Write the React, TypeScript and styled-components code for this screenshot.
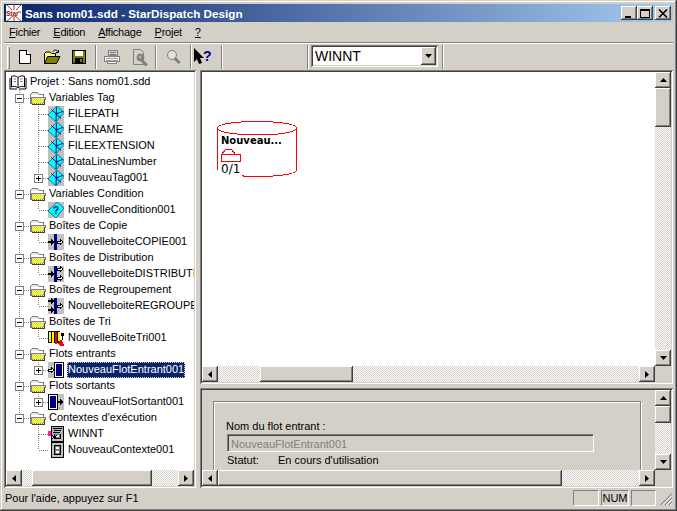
import styled, { createGlobalStyle } from 'styled-components';

const GlobalStyle = createGlobalStyle`
  html, body { margin: 0; padding: 0; background: #d4d0c8; }
  * { box-sizing: border-box; }
`;

const FACE = '#d4d0c8';
const DITHER = `repeating-conic-gradient(#fff 0 25%, ${FACE} 0 50%) 0 0 / 2px 2px`;
const RAISED = 'inset -1px -1px 0 #404040, inset 1px 1px 0 #fff, inset -2px -2px 0 #808080';
const SUNKEN = 'inset 1px 1px 0 #808080, inset -1px -1px 0 #fff, inset 2px 2px 0 #404040, inset -2px -2px 0 #d4d0c8';

type IconKind = 'tag' | 'cond' | 'copy' | 'dist' | 'group' | 'sort' | 'in' | 'out' | 'ctxOn' | 'ctx';

type TreeRow = {
  level: 0 | 1 | 2;
  label: string;
  icon?: IconKind;
  plus?: boolean;
  last?: boolean;
  lastGroup?: boolean;
  selected?: boolean;
};

const rows: TreeRow[] = [
  { level: 0, label: 'Projet : Sans nom01.sdd' },
  { level: 1, label: 'Variables Tag' },
  { level: 2, label: 'FILEPATH', icon: 'tag' },
  { level: 2, label: 'FILENAME', icon: 'tag' },
  { level: 2, label: 'FILEEXTENSION', icon: 'tag' },
  { level: 2, label: 'DataLinesNumber', icon: 'tag' },
  { level: 2, label: 'NouveauTag001', icon: 'tag', plus: true, last: true },
  { level: 1, label: 'Variables Condition' },
  { level: 2, label: 'NouvelleCondition001', icon: 'cond', last: true },
  { level: 1, label: 'Boîtes de Copie' },
  { level: 2, label: 'NouvelleboiteCOPIE001', icon: 'copy', last: true },
  { level: 1, label: 'Boîtes de Distribution' },
  { level: 2, label: 'NouvelleboiteDISTRIBUTION001', icon: 'dist', last: true },
  { level: 1, label: 'Boîtes de Regroupement' },
  { level: 2, label: 'NouvelleboiteREGROUPEMENT001', icon: 'group', last: true },
  { level: 1, label: 'Boîtes de Tri' },
  { level: 2, label: 'NouvelleBoiteTri001', icon: 'sort', last: true },
  { level: 1, label: 'Flots entrants' },
  { level: 2, label: 'NouveauFlotEntrant001', icon: 'in', plus: true, last: true, selected: true },
  { level: 1, label: 'Flots sortants' },
  { level: 2, label: 'NouveauFlotSortant001', icon: 'out', plus: true, last: true },
  { level: 1, label: "Contextes d'exécution", last: true },
  { level: 2, label: 'WINNT', icon: 'ctxOn', lastGroup: true },
  { level: 2, label: 'NouveauContexte001', icon: 'ctx', last: true, lastGroup: true },
];

// checker of yellow pixels on the folder front
const folderDots: [number, number][] = [];
for (let y = 7; y < 13; y++) {
  for (let x = 3; x < 15; x++) {
    if ((x + y) % 2 === 0) folderDots.push([x, y]);
  }
}

const Logo = () => (
  <svg width="16" height="16" viewBox="0 0 16 16">
    <rect width="16" height="16" fill="#fff" />
    <g stroke="#b03020" strokeWidth="1">
      <line x1="8" y1="7" x2="1" y2="0" />
      <line x1="8" y1="7" x2="8" y2="0" />
      <line x1="8" y1="7" x2="15" y2="0" />
      <line x1="8" y1="7" x2="15" y2="7" />
      <line x1="8" y1="10" x2="15" y2="16" />
      <line x1="8" y1="10" x2="8" y2="16" />
      <line x1="8" y1="10" x2="1" y2="16" />
    </g>
    <rect x="0" y="5" width="12" height="6" fill="#fff" />
    <text x="0" y="10.5" fontSize="6.5" fontWeight="700" fill="#a01010" fontFamily="Liberation Sans, sans-serif">Star</text>
  </svg>
);

const FolderOpen = () => (
  <svg width="18" height="15" viewBox="0 0 18 15" shapeRendering="crispEdges">
    <polygon points="1.5,12.5 1.5,3.5 3.5,1.5 8.5,1.5 10.5,3.5 14.5,3.5 14.5,12.5" fill="#ece8e0" stroke="#808080" />
    <rect x="2" y="4" width="12" height="2" fill="#fff" />
    <polygon points="2.5,12.5 2.5,6.5 16.5,6.5 16.5,7.5 14.5,12.5" fill="#d8d4b0" stroke="#808080" />
    {folderDots.map(([x, y]) => (
      <rect key={`${x}-${y}`} x={x} y={y} width="1" height="1" fill="#ffff00" />
    ))}
    <rect x="3" y="13" width="13" height="1" fill="#404040" />
    <rect x="15" y="8" width="1" height="5" fill="#404040" />
  </svg>
);

const Book = () => (
  <svg width="18" height="16" viewBox="0 0 18 16" fill="none" stroke="#000">
    <path d="M9 3.5 C7 1.5 4 1.5 2.5 2.5 V13 C4 12 7 12 9 14 C11 12 14 12 15.5 13 V2.5 C14 1.5 11 1.5 9 3.5 Z" fill="#fff" />
    <path d="M9 3.5 V14 M1 4 V15 H8 M17 4 V15 H10" />
    <path d="M4.5 5 H7 M4.5 7.5 H7 M11 5 H13.5 M11 7.5 H13.5" stroke="#808080" />
  </svg>
);

const NodeIcon = ({ kind }: { kind: IconKind }) => {
  if (kind === 'tag' || kind === 'cond') {
    return (
      <svg width="16" height="16" viewBox="0 0 16 16">
        <rect width="16" height="16" fill="#c0c0c0" />
        <polygon points="9,0 16,6 8,16 0,9" fill="#00ffff" stroke="#006080" strokeWidth="0.8" />
        {kind === 'tag' ? (
          <path d="M3.5 3.5 L13 12.5 M8.5 1.5 L8 15 M8 8 L14.5 5.5" stroke="#000080" strokeWidth="1" fill="none" />
        ) : (
          <text x="5" y="12" fontSize="10" fontWeight="700" fill="#000080" fontFamily="Liberation Sans, sans-serif">?</text>
        )}
      </svg>
    );
  }
  if (kind === 'copy' || kind === 'dist' || kind === 'group') {
    return (
      <svg width="16" height="16" viewBox="0 0 16 16" shapeRendering="crispEdges">
        <rect width="16" height="16" fill="#c0c0c0" />
        <rect x="6" y="0" width="3" height="16" fill="#000080" />
        {kind !== 'group' && <polygon points="0,7 3,7 3,5 6,8 3,11 3,9 0,9" fill="#000" />}
        {kind !== 'dist' && <polygon points="9,7 12,7 12,5 15,8 12,11 12,9 9,9" fill="#fff" stroke="#000" />}
        {kind === 'dist' && <polygon points="9,2 12,2 12,0 15,3 12,6 12,4 9,4" fill="#fff" stroke="#000" />}
        {kind === 'dist' && <polygon points="9,11 12,11 12,9 15,12 12,15 12,13 9,13" fill="#fff" stroke="#000" />}
        {kind === 'group' && <polygon points="0,2 3,2 3,0 6,3 3,6 3,4 0,4" fill="#000" />}
        {kind === 'group' && <polygon points="0,11 3,11 3,9 6,12 3,15 3,13 0,13" fill="#000" />}
      </svg>
    );
  }
  if (kind === 'sort') {
    return (
      <svg width="16" height="16" viewBox="0 0 16 16" shapeRendering="crispEdges">
        <rect x="0" y="1" width="12" height="12" fill="#000" />
        <rect x="1" y="2" width="2" height="10" fill="#ffff00" />
        <rect x="4" y="2" width="2" height="11" fill="#ffff00" />
        <rect x="7" y="2" width="2" height="12" fill="#ff0000" />
        <rect x="10" y="2" width="2" height="9" fill="#ffff00" />
        <rect x="13" y="3" width="3" height="3" fill="#000" />
        <rect x="14" y="6" width="1" height="4" fill="#000" />
        <polygon points="10,14 13,9 16,15 16,16 12,16" fill="#ff0000" />
      </svg>
    );
  }
  if (kind === 'in' || kind === 'out') {
    return (
      <svg width="16" height="16" viewBox="0 0 16 16" shapeRendering="crispEdges">
        <rect width="16" height="16" fill="#c0c0c0" />
        {kind === 'in' ? (
          <>
            <polygon points="0,7 3,7 3,5 6,8 3,11 3,9 0,9" fill="#fff" stroke="#000" />
            <rect x="6.5" y="0.5" width="9" height="15" fill="#fff" stroke="#000" />
            <rect x="8" y="2" width="6" height="12" fill="#000080" />
          </>
        ) : (
          <>
            <rect x="0.5" y="0.5" width="9" height="15" fill="#fff" stroke="#000" />
            <rect x="2" y="2" width="6" height="12" fill="#000080" />
            <polygon points="10,7 12,7 12,5 15,8 12,11 12,9 10,9" fill="#000" />
          </>
        )}
      </svg>
    );
  }
  return (
    <svg width="16" height="16" viewBox="0 0 16 16" shapeRendering="crispEdges">
      <rect x="3.5" y="0.5" width="12" height="15" fill="#c0c0c0" stroke="#000" />
      <rect x="6.5" y="3.5" width="6" height="9" fill="#808080" stroke="#000" />
      <rect x="8" y="5" width="3" height="2" fill="#fff" />
      <rect x="8" y="9" width="3" height="2" fill="#fff" />
      {kind === 'ctxOn' && (
        <>
          <rect x="4" y="1" width="11" height="7" fill="#b0b0b0" />
          <path d="M5 2 H14 M6 4 H13 M5 6 H12 M4 9 L9 13 M9 9 L4 13" stroke="#000" fill="none" />
          <rect x="0" y="5" width="3" height="5" fill="#ff20a0" />
        </>
      )}
    </svg>
  );
};

const ToolIcon = ({ kind }: { kind: 'new' | 'open' | 'save' | 'print' | 'preview' | 'find' | 'help' }) => {
  switch (kind) {
    case 'new':
      return (
        <svg width="16" height="16" viewBox="0 0 16 16" shapeRendering="crispEdges">
          <path d="M2.5 1.5 H9.5 L13.5 5.5 V14.5 H2.5 Z" fill="#fff" stroke="#000" />
          <path d="M9.5 1.5 V5.5 H13.5" fill="#fff" stroke="#000" />
        </svg>
      );
    case 'open':
      return (
        <svg width="18" height="16" viewBox="0 0 18 16">
          <path d="M1.5 14.5 V4.5 L3 3 H7 L8.5 4.5 H12.5 V7" fill="#ffff80" stroke="#000" />
          <polygon points="1.5,14.5 4.5,7.5 17,7.5 13.5,14.5" fill="#808000" stroke="#000" />
          <path d="M10 2.5 C11 0.5 14 0.5 15 3 M15.5 1 V3.5 H13" fill="none" stroke="#000" />
        </svg>
      );
    case 'save':
      return (
        <svg width="16" height="16" viewBox="0 0 16 16" shapeRendering="crispEdges">
          <rect x="1.5" y="1.5" width="13" height="13" fill="#808000" stroke="#000" />
          <rect x="4" y="2" width="8" height="5" fill="#fff" />
          <rect x="4" y="9" width="8" height="5" fill="#000" />
          <rect x="9" y="10" width="2" height="3" fill="#808000" />
        </svg>
      );
    case 'print':
      return (
        <svg width="18" height="16" viewBox="0 0 18 16" shapeRendering="crispEdges">
          <path d="M5.5 1.5 H14.5 V6.5 H5.5 Z" fill="#d4d0c8" stroke="#808080" />
          <path d="M7 3.5 H13 M7 5 H13" stroke="#808080" />
          <path d="M1.5 7.5 H16.5 V12.5 H1.5 Z" fill="#fff" stroke="#808080" />
          <path d="M3 9.5 H15 M3 11 H15" stroke="#a0a0a0" />
          <path d="M4.5 12.5 H13.5 V14.5 H4.5 Z" fill="#fff" stroke="#808080" />
        </svg>
      );
    case 'preview':
      return (
        <svg width="18" height="18" viewBox="0 0 18 18">
          <path d="M1.5 1.5 H8.5 L11.5 4.5 V16.5 H1.5 Z" fill="#d4d0c8" stroke="#808080" />
          <circle cx="8.5" cy="9.5" r="3.5" fill="#808080" stroke="#808080" />
          <rect x="10" y="12" width="7" height="3" transform="rotate(45 11 13)" fill="#808080" />
          <circle cx="8" cy="9" r="1.5" fill="#b0b0b0" />
        </svg>
      );
    case 'find':
      return (
        <svg width="18" height="16" viewBox="0 0 18 16">
          <circle cx="7" cy="6" r="4.5" fill="#e4e0d8" stroke="#808080" />
          <rect x="10" y="8.5" width="7" height="3" transform="rotate(45 11 9)" fill="#808080" />
        </svg>
      );
    default:
      return (
        <svg width="19" height="18" viewBox="0 0 19 18">
          <polygon points="1,0 1,14 4,11 6,16 9,15 7,10 11,10" fill="#000" />
          <text x="10" y="13" fontSize="14" fontWeight="700" fill="#000080" fontFamily="Liberation Sans, sans-serif">?</text>
        </svg>
      );
  }
};

const ScrollArrow = ({ dir }: { dir: 'up' | 'down' | 'left' | 'right' }) => {
  const points = {
    up: '0,4 7,4 3.5,0',
    down: '0,0 7,0 3.5,4',
    left: '4,0 4,7 0,3.5',
    right: '0,0 0,7 4,3.5',
  }[dir];
  const horizontal = dir === 'left' || dir === 'right';
  return (
    <svg width={horizontal ? 4 : 7} height={horizontal ? 7 : 4} viewBox={horizontal ? '0 0 4 7' : '0 0 7 4'}>
      <polygon points={points} fill="#000" />
    </svg>
  );
};

const HScroll = ({ offset, size }: { offset: number; size: number }) => (
  <HBar>
    <ScrollBtn><ScrollArrow dir="left" /></ScrollBtn>
    <Trough>
      <HThumb $offset={offset} $size={size} />
    </Trough>
    <ScrollBtn><ScrollArrow dir="right" /></ScrollBtn>
  </HBar>
);

const VScroll = ({ offset, size }: { offset: number; size: number }) => (
  <VBar>
    <ScrollBtn><ScrollArrow dir="up" /></ScrollBtn>
    <VTrough>
      <VThumb $offset={offset} $size={size} />
    </VTrough>
    <ScrollBtn><ScrollArrow dir="down" /></ScrollBtn>
  </VBar>
);

const ExpanderBox = ({ open }: { open?: boolean }) => (
  <Expander>
    <svg width="7" height="7" viewBox="0 0 7 7" shapeRendering="crispEdges">
      <rect x="1" y="3" width="5" height="1" fill="#000" />
      {!open && <rect x="3" y="1" width="1" height="5" fill="#000" />}
    </svg>
  </Expander>
);

const Row = ({ row }: { row: TreeRow }) => (
  <RowLine $level={row.level}>
    {row.level === 1 && (
      <Guide $line={row.last ? 'half' : 'full'} $stem>
        <ExpanderBox open />
      </Guide>
    )}
    {row.level === 2 && (
      <>
        <Guide $line={row.lastGroup ? 'none' : 'full'} />
        <Guide $line={row.last ? 'half' : 'full'} $stem>
          {row.plus && <ExpanderBox />}
        </Guide>
      </>
    )}
    {row.level === 0 && <Book />}
    {row.level === 1 && <FolderSlot><FolderOpen /></FolderSlot>}
    {row.icon && <NodeIcon kind={row.icon} />}
    <Label $selected={row.selected} $level={row.level}>{row.label}</Label>
  </RowLine>
);

export default function App() {
  return (
    <>
      <GlobalStyle />
      <Window>
        <TitleBar>
          <Logo />
          <TitleText>Sans nom01.sdd - StarDispatch Design</TitleText>
          <CaptionButtons>
            <CaptionBtn>
              <svg width="10" height="9" viewBox="0 0 10 9"><rect x="1" y="7" width="6" height="2" fill="#000" /></svg>
            </CaptionBtn>
            <CaptionBtn>
              <svg width="10" height="9" viewBox="0 0 10 9" shapeRendering="crispEdges"><rect x="0.5" y="0.5" width="9" height="8" fill="none" stroke="#000" /><rect x="0" y="0" width="10" height="2" fill="#000" /></svg>
            </CaptionBtn>
            <CloseBtn>
              <svg width="10" height="9" viewBox="0 0 10 9"><path d="M1 0.5 L9 8.5 M9 0.5 L1 8.5" stroke="#000" strokeWidth="1.6" /></svg>
            </CloseBtn>
          </CaptionButtons>
        </TitleBar>

        <MenuBar>
          <MenuItem><u>F</u>ichier</MenuItem>
          <MenuItem><u>E</u>dition</MenuItem>
          <MenuItem><u>A</u>ffichage</MenuItem>
          <MenuItem><u>P</u>rojet</MenuItem>
          <MenuItem><u>?</u></MenuItem>
        </MenuBar>
        <Rule />

        <ToolBar>
          <Grip />
          <ToolSlot $w={27}><ToolIcon kind="new" /></ToolSlot>
          <ToolSlot $w={27}><ToolIcon kind="open" /></ToolSlot>
          <ToolSlot $w={27}><ToolIcon kind="save" /></ToolSlot>
          <Spacer $w={3} />
          <ToolSep />
          <ToolSlot $w={29}><ToolIcon kind="print" /></ToolSlot>
          <ToolSlot $w={29}><ToolIcon kind="preview" /></ToolSlot>
          <ToolSep />
          <ToolSlot $w={33}><ToolIcon kind="find" /></ToolSlot>
          <ToolSep />
          <ToolSlot $w={21}><ToolIcon kind="help" /></ToolSlot>
          <Spacer $w={8} />
          <ToolSep />
          <Spacer $w={84} />
          <ToolSep />
          <Combo>
            <ComboText>WINNT</ComboText>
            <ComboBtn><ScrollArrow dir="down" /></ComboBtn>
          </Combo>
          <ToolSep />
        </ToolBar>

        <Body>
          <TreePanel>
            <TreeView>
              {rows.map((row) => <Row key={row.label} row={row} />)}
            </TreeView>
            <HScroll offset={10} size={120} />
          </TreePanel>

          <RightColumn>
            <UpperPane>
              <PaneGrid>
                <Canvas>
                  <DiagramNode>
                    <NodeOutline width="81" height="57" viewBox="0 0 81 57" shapeRendering="crispEdges">
                      <path d="M0.5 7 C0.5 3 18 0.5 40 0.5 C62 0.5 79.5 3 79.5 7 C79.5 11 62 14 40 14 C18 14 0.5 11 0.5 7 V49 M79.5 7 V49 C79.5 53 62 55.5 40 55.5 C32 55.5 27 55.5 23 54.5" fill="none" stroke="#f00" />
                    </NodeOutline>
                    <NodeTitle>Nouveau...</NodeTitle>
                    <NodeFolder width="21" height="13" viewBox="0 0 21 13" shapeRendering="crispEdges">
                      <path d="M0.5 5.5 L4.5 0.5 H10.5 L14.5 5.5 H19.5 V12.5 H0.5 Z M0.5 5.5 H14.5" fill="none" stroke="#f00" />
                    </NodeFolder>
                    <NodeCount>0/1</NodeCount>
                  </DiagramNode>
                </Canvas>
                <VScroll offset={0} size={39} />
                <HScroll offset={42} size={93} />
                <Corner />
              </PaneGrid>
            </UpperPane>

            <LowerPane>
              <PaneGrid>
                <FormArea>
                  <GroupBox>
                    <FieldLabel>Nom du flot entrant :</FieldLabel>
                    <DisabledInput>NouveauFlotEntrant001</DisabledInput>
                    <StatusLine>
                      <StatusKey>Statut:</StatusKey>
                      <span>En cours d'utilisation</span>
                    </StatusLine>
                  </GroupBox>
                </FormArea>
                <VScroll offset={0} size={17} />
                <HScroll offset={0} size={344} />
                <Corner />
              </PaneGrid>
            </LowerPane>
          </RightColumn>
        </Body>

        <StatusBar>
          <StatusText>Pour l'aide, appuyez sur F1</StatusText>
          <Indicator $w={26} />
          <Indicator $w={28}>NUM</Indicator>
          <Indicator $w={25} />
          <SizeGrip>
            <svg width="14" height="14" viewBox="0 0 14 14">
              <path d="M13 2 L2 13 M13 6 L6 13 M13 10 L10 13" stroke="#808080" strokeWidth="1.2" />
              <path d="M13 3.2 L3.2 13 M13 7.2 L7.2 13 M13 11.2 L11.2 13" stroke="#fff" />
            </svg>
          </SizeGrip>
        </StatusBar>
      </Window>
    </>
  );
}

const Window = styled.div`
  width: 677px;
  height: 511px;
  padding: 4px;
  overflow: hidden;
  display: flex;
  flex-direction: column;
  background: ${FACE};
  box-shadow: inset -1px -1px 0 #404040, inset 1px 1px 0 ${FACE}, inset -2px -2px 0 #808080, inset 2px 2px 0 #fff;
  font-family: "Liberation Sans", Arial, sans-serif;
  font-size: 11px;
  color: #000;
`;

const TitleBar = styled.div`
  height: 18px;
  flex: none;
  display: flex;
  align-items: center;
  padding: 0 2px;
  background: linear-gradient(90deg, #0a246a, #a6caf0);
`;

const TitleText = styled.span`
  margin-left: 3px;
  flex: 1;
  color: #fff;
  font-weight: 700;
  font-size: 11.7px;
  white-space: nowrap;
`;

const CaptionButtons = styled.div`
  display: flex;
`;

const CaptionBtn = styled.div`
  width: 16px;
  height: 14px;
  display: flex;
  align-items: center;
  justify-content: center;
  background: ${FACE};
  box-shadow: ${RAISED};
`;

const CloseBtn = styled(CaptionBtn)`
  margin-left: 2px;
`;

const MenuBar = styled.div`
  height: 20px;
  flex: none;
  display: flex;
  align-items: center;
  padding-left: 5px;
  gap: 13px;
`;

const MenuItem = styled.span`
  font-size: 11px;
  letter-spacing: -0.25px;
`;

const Rule = styled.div`
  height: 2px;
  flex: none;
  background: #808080;
  border-bottom: 1px solid #fff;
`;

const ToolBar = styled.div`
  height: 26px;
  flex: none;
  display: flex;
  align-items: center;
  padding-left: 3px;
`;

const Grip = styled.div`
  width: 3px;
  height: 23px;
  margin-right: 1px;
  background: ${FACE};
  box-shadow: inset 1px 1px 0 #fff, inset -1px -1px 0 #808080;
`;

const ToolSlot = styled.div<{ $w: number }>`
  width: ${({ $w }) => $w}px;
  height: 24px;
  flex: none;
  display: flex;
  align-items: center;
  justify-content: center;
`;

const ToolSep = styled.div`
  width: 2px;
  height: 24px;
  flex: none;
  border-left: 1px solid #808080;
  border-right: 1px solid #fff;
`;

const Spacer = styled.div<{ $w: number }>`
  width: ${({ $w }) => $w}px;
  flex: none;
`;

const Combo = styled.div`
  width: 127px;
  height: 22px;
  flex: none;
  margin: 0 4px 2px 2px;
  padding: 2px;
  display: flex;
  background: #fff;
  box-shadow: ${SUNKEN};
`;

const ComboText = styled.span`
  flex: 1;
  padding-left: 2px;
  font-size: 14px;
  line-height: 18px;
`;

const ComboBtn = styled.div`
  width: 15px;
  display: flex;
  align-items: center;
  justify-content: center;
  background: ${FACE};
  box-shadow: ${RAISED};
`;

const Body = styled.div`
  height: 418px;
  flex: none;
  display: flex;
  gap: 4px;
`;

const TreePanel = styled.div`
  width: 192px;
  flex: none;
  padding: 2px;
  display: flex;
  flex-direction: column;
  box-shadow: ${SUNKEN};
`;

const TreeView = styled.div`
  flex: 1;
  min-height: 0;
  padding-top: 2px;
  background: #fff;
  overflow: hidden;
`;

const RowLine = styled.div<{ $level: number }>`
  height: 16px;
  display: flex;
  align-items: center;
  padding-left: ${({ $level }) => ($level === 0 ? 3 : 4)}px;
  white-space: nowrap;

  & > svg {
    flex: none;
  }
`;

const Guide = styled.span<{ $line: 'full' | 'half' | 'none'; $stem?: boolean }>`
  position: relative;
  flex: none;
  width: 19px;
  height: 16px;

  &::before {
    content: '';
    display: ${({ $line }) => ($line === 'none' ? 'none' : 'block')};
    position: absolute;
    left: 9px;
    top: 0;
    width: 1px;
    height: ${({ $line }) => ($line === 'half' ? 8 : 16)}px;
    background: repeating-linear-gradient(180deg, #808080 0 1px, transparent 1px 2px);
  }

  &::after {
    content: '';
    display: ${({ $stem }) => ($stem ? 'block' : 'none')};
    position: absolute;
    left: 10px;
    top: 8px;
    width: 9px;
    height: 1px;
    background: repeating-linear-gradient(90deg, #808080 0 1px, transparent 1px 2px);
  }
`;

const Expander = styled.span`
  position: absolute;
  z-index: 1;
  left: 5px;
  top: 4px;
  width: 9px;
  height: 9px;
  border: 1px solid #808080;
  background: #fff;
  display: flex;
`;

const FolderSlot = styled.span`
  width: 16px;
  height: 15px;
  flex: none;
`;

const Label = styled.span<{ $selected?: boolean; $level: number }>`
  flex: none;
  margin-left: ${({ $level }) => ($level === 0 ? 2 : 3)}px;
  padding: 0 1px;
  height: 16px;
  line-height: 15px;
  font-size: 11px;
  background: ${({ $selected }) => ($selected ? '#0a246a' : 'transparent')};
  color: ${({ $selected }) => ($selected ? '#fff' : '#000')};
  outline: ${({ $selected }) => ($selected ? '1px dotted #d4d0c8' : 'none')};
  outline-offset: -1px;
`;

const RightColumn = styled.div`
  flex: 1;
  min-width: 0;
  display: flex;
  flex-direction: column;
  gap: 4px;
`;

const UpperPane = styled.div`
  height: 314px;
  padding: 2px;
  box-shadow: ${SUNKEN};
`;

const PaneGrid = styled.div`
  height: 100%;
  display: grid;
  grid-template-columns: minmax(0, 1fr) 16px;
  grid-template-rows: minmax(0, 1fr) 16px;
`;

const Canvas = styled.div`
  position: relative;
  min-width: 0;
  background: #fff;
`;

const DiagramNode = styled.div`
  position: absolute;
  left: 15px;
  top: 49px;
  width: 81px;
  height: 57px;
  padding: 13px 0 0 4px;
  display: flex;
  flex-direction: column;
  align-items: flex-start;
`;

const NodeOutline = styled.svg`
  position: absolute;
  left: 0;
  top: 0;
`;

const NodeTitle = styled.span`
  position: relative;
  font-family: "DejaVu Sans", sans-serif;
  font-weight: 700;
  font-size: 10px;
  line-height: 13px;
  margin-bottom: 2px;
`;

const NodeFolder = styled.svg`
  position: relative;
  flex: none;
`;

const NodeCount = styled.span`
  position: relative;
  background: #fff;
  padding-right: 2px;
  font-family: "DejaVu Sans", sans-serif;
  font-size: 12px;
  line-height: 14px;
`;

const LowerPane = styled.div`
  height: 100px;
  padding: 2px;
  box-shadow: ${SUNKEN};
`;

const FormArea = styled.div`
  min-width: 0;
  min-height: 0;
  overflow: hidden;
  padding: 11px 0 0 11px;
`;

const GroupBox = styled.div`
  width: 428px;
  height: 120px;
  padding: 17px 0 0 12px;
  border: 1px solid #808080;
  box-shadow: inset 1px 1px 0 #fff, 1px 1px 0 #fff;
`;

const FieldLabel = styled.div`
  height: 14px;
  line-height: 14px;
`;

const DisabledInput = styled.div`
  width: 367px;
  height: 18px;
  margin: 1px 0 1px 1px;
  padding: 2px 3px;
  line-height: 14px;
  color: #808080;
  border-top: 1px solid #808080;
  border-left: 1px solid #808080;
  border-right: 1px solid #fff;
  border-bottom: 1px solid #fff;
  box-shadow: inset 1px 1px 0 #404040;
`;

const StatusLine = styled.div`
  display: flex;
  height: 14px;
  line-height: 14px;
  padding-left: 1px;
`;

const StatusKey = styled.span`
  width: 51px;
`;

const HBar = styled.div`
  height: 16px;
  flex: none;
  display: flex;
  background: ${FACE};
`;

const VBar = styled.div`
  width: 16px;
  min-height: 0;
  display: flex;
  flex-direction: column;
  background: ${FACE};
`;

const ScrollBtn = styled.div`
  width: 16px;
  height: 16px;
  flex: none;
  display: flex;
  align-items: center;
  justify-content: center;
  background: ${FACE};
  box-shadow: ${RAISED};
`;

const Trough = styled.div`
  flex: 1;
  min-width: 0;
  background: ${DITHER};
`;

const VTrough = styled(Trough)`
  min-height: 0;
`;

const HThumb = styled.div<{ $offset: number; $size: number }>`
  height: 16px;
  width: ${({ $size }) => $size}px;
  margin-left: ${({ $offset }) => $offset}px;
  background: ${FACE};
  box-shadow: ${RAISED};
`;

const VThumb = styled.div<{ $offset: number; $size: number }>`
  width: 16px;
  height: ${({ $size }) => $size}px;
  margin-top: ${({ $offset }) => $offset}px;
  background: ${FACE};
  box-shadow: ${RAISED};
`;

const Corner = styled.div`
  background: ${FACE};
`;

const StatusBar = styled.div`
  height: 18px;
  margin-top: 1px;
  flex: none;
  display: flex;
  align-items: center;
  gap: 2px;
`;

const StatusText = styled.span`
  flex: 1;
  padding-left: 1px;
  font-size: 11px;
`;

const Indicator = styled.div<{ $w: number }>`
  width: ${({ $w }) => $w}px;
  height: 16px;
  display: flex;
  align-items: center;
  justify-content: center;
  font-size: 11px;
  border-top: 1px solid #808080;
  border-left: 1px solid #808080;
  border-right: 1px solid #fff;
  border-bottom: 1px solid #fff;
`;

const SizeGrip = styled.div`
  width: 15px;
  height: 16px;
  display: flex;
  align-items: flex-end;
  justify-content: flex-end;
`;
